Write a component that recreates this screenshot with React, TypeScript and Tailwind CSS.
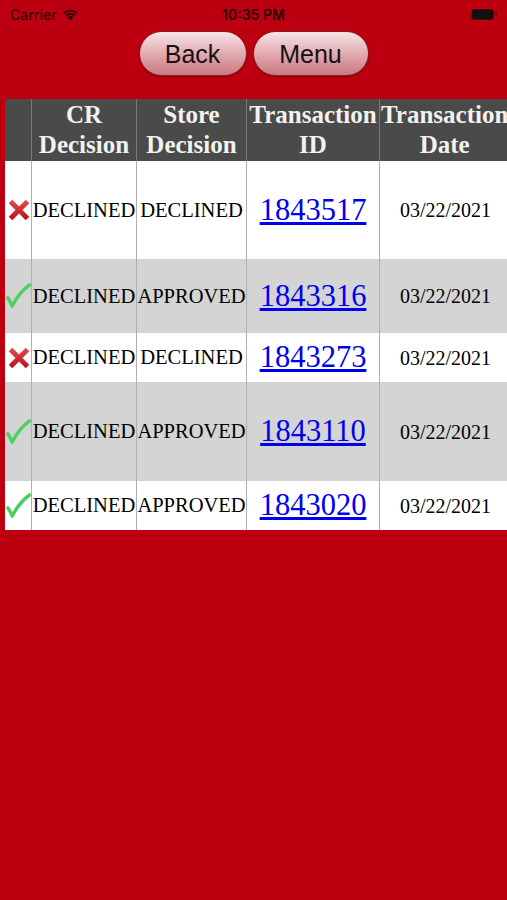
import React from "react";

type Row = { ok: boolean; cr: string; store: string; id: string; date: string; h: string; bg: string };

const rows: Row[] = [
  { ok: false, cr: "DECLINED", store: "DECLINED", id: "1843517", date: "03/22/2021", h: "h-[98px]", bg: "bg-white" },
  { ok: true, cr: "DECLINED", store: "APPROVED", id: "1843316", date: "03/22/2021", h: "h-[74px]", bg: "bg-[#d4d4d4]" },
  { ok: false, cr: "DECLINED", store: "DECLINED", id: "1843273", date: "03/22/2021", h: "h-[49px]", bg: "bg-white" },
  { ok: true, cr: "DECLINED", store: "APPROVED", id: "1843110", date: "03/22/2021", h: "h-[99px]", bg: "bg-[#d4d4d4]" },
  { ok: true, cr: "DECLINED", store: "APPROVED", id: "1843020", date: "03/22/2021", h: "h-[49px]", bg: "bg-white" },
];

function XIcon() {
  return (
    <svg width="24" height="24" viewBox="0 0 24 24">
      <defs>
        <linearGradient id="xg" x1="0" y1="0" x2="0" y2="1">
          <stop offset="0" stopColor="#e0484c" />
          <stop offset="1" stopColor="#b8161c" />
        </linearGradient>
      </defs>
      <path d="M3.5 3.5 L20.5 20.5 M20.5 3.5 L3.5 20.5" stroke="url(#xg)" strokeWidth="5" strokeLinecap="butt" fill="none" />
    </svg>
  );
}

function CheckIcon() {
  return (
    <svg width="26" height="26" viewBox="0 0 26 26">
      <path
        d="M2 15 Q4.5 18.5 6.5 23.5 Q13 10 24.5 1.5"
        stroke="#4ccf5f"
        strokeWidth="3.6"
        strokeLinecap="round"
        strokeLinejoin="round"
        fill="none"
      />
    </svg>
  );
}

function PillButton({ label, w }: { label: string; w: string }) {
  return (
    <button
      className={`${w} h-[45px] rounded-full border border-[#8e1a24] bg-[linear-gradient(to_bottom,#f6e4e6_0%,#e8bcc1_35%,#d9959d_70%,#c97a84_100%)] shadow-[0_1px_2px_rgba(0,0,0,0.35)] text-[25px] leading-none text-[#111] font-['Liberation_Sans',Arial,sans-serif] flex items-center justify-center pt-[1px]`}
    >
      {label}
    </button>
  );
}

export default function App() {
  return (
    <div className="w-[507px] h-[900px] overflow-hidden bg-[#bd000f] relative">
      {/* status bar */}
      <div className="h-[28px] flex items-center justify-between px-[10px] font-['Inter','Liberation_Sans',sans-serif] text-[#3d0005]">
        <div className="flex items-center gap-[5px] w-[110px]">
          <span className="text-[14px] font-medium">Carrier</span>
          <svg width="17" height="13" viewBox="0 0 17 13">
            <path d="M8.5 12.5 L5.6 9.3 A4.2 4.2 0 0 1 11.4 9.3 Z" fill="#2a0003" />
            <path d="M3.6 7.1 A7 7 0 0 1 13.4 7.1 L12.1 8.5 A5.2 5.2 0 0 0 4.9 8.5 Z" fill="#2a0003" />
            <path d="M1.3 4.6 A10.3 10.3 0 0 1 15.7 4.6 L14.4 6 A8.4 8.4 0 0 0 2.6 6 Z" fill="#2a0003" />
          </svg>
        </div>
        <span className="text-[14px] font-semibold text-[#2a0003]">10:35 PM</span>
        <div className="w-[110px] flex justify-end">
          <div className="flex items-center">
            <div className="w-[23px] h-[11px] rounded-[3px] bg-[#111] border border-[#5a0008]" />
            <div className="w-[2px] h-[4px] rounded-r-sm bg-[#5a0008] ml-[1px]" />
          </div>
        </div>
      </div>

      {/* buttons */}
      <div className="mt-[3px] flex justify-center gap-[6px]">
        <PillButton label="Back" w="w-[108px]" />
        <PillButton label="Menu" w="w-[116px]" />
      </div>

      {/* table */}
      <div className="mt-[23px] ml-[5px] w-[520px] font-['Liberation_Serif','Times_New_Roman',serif]">
        <div className="grid grid-cols-[27px_105px_110px_133px_145px] h-[62px] bg-[#4a4a4a] text-[#f2f2f2] font-bold text-[25px] leading-[30px] text-center">
          <div className="border-r border-[#7a7a7a]" />
          <div className="border-r border-[#7a7a7a] flex items-center justify-center">CR<br />Decision</div>
          <div className="border-r border-[#7a7a7a] flex items-center justify-center">Store<br />Decision</div>
          <div className="border-r border-[#7a7a7a] flex items-center justify-center whitespace-nowrap">Transaction<br />ID</div>
          <div className="flex items-center justify-start pl-[1px] whitespace-nowrap">Transaction<br />Date</div>
        </div>
        {rows.map((r, i) => (
          <div key={i} className={`grid grid-cols-[27px_105px_110px_133px_145px] ${r.h} ${r.bg} text-black`}>
            <div className="border-r border-[#b0b0b0] flex items-center justify-center pl-[1px]">
              {r.ok ? <CheckIcon /> : <XIcon />}
            </div>
            <div className="border-r border-[#b0b0b0] flex items-center justify-center text-[20.5px] whitespace-nowrap">
              {r.cr}
            </div>
            <div className="border-r border-[#b0b0b0] flex items-center justify-center text-[20.5px] whitespace-nowrap">
              {r.store}
            </div>
            <div className="border-r border-[#b0b0b0] flex items-center justify-center">
              <a href="#" className="text-[30.5px] text-[#0000ee] underline leading-none">{r.id}</a>
            </div>
            <div className="flex items-center pl-[20px] text-[20px] whitespace-nowrap">{r.date}</div>
          </div>
        ))}
      </div>
    </div>
  );
}
